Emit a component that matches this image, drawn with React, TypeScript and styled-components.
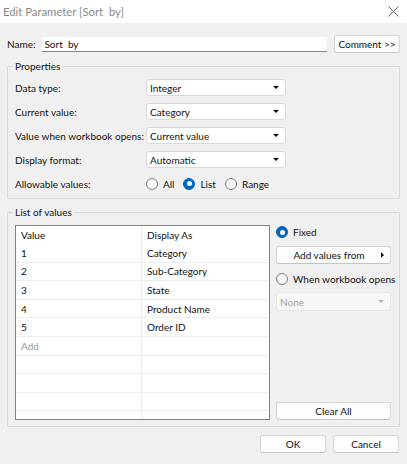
import React from "react";
import styled, { createGlobalStyle } from "styled-components";

const GlobalStyle = createGlobalStyle`
  html, body {
    margin: 0;
    padding: 0;
    background: #f0f0f0;
  }
  * {
    box-sizing: border-box;
  }
`;

const Window = styled.div`
  width: 407px;
  height: 464px;
  background: #f0f0f0;
  display: flex;
  flex-direction: column;
  font-family: Lato, "Noto Sans", sans-serif;
  font-size: 10px;
  color: #111111;
  overflow: hidden;
`;

const TitleBar = styled.div`
  height: 23px;
  background: #ffffff;
  display: flex;
  align-items: center;
  justify-content: space-between;
  padding: 0 8px 1px 3px;
`;

const Title = styled.span`
  color: #8a8a8a;
  font-size: 11.3px;
  white-space: pre;
`;

const Body = styled.div`
  flex: 1;
  display: flex;
  flex-direction: column;
  padding: 0 7px;
`;

const NameRow = styled.div`
  display: flex;
  align-items: center;
  gap: 7px;
  margin-top: 12px;
  height: 17px;
`;

const Label = styled.span`
  white-space: nowrap;
`;

const NameInput = styled.div`
  flex: 1;
  height: 15px;
  margin-top: 1px;
  background: #ffffff;
  border-bottom: 1px solid #868686;
  border-radius: 2px 2px 0 0;
  padding-left: 2px;
  display: flex;
  align-items: center;
  white-space: pre;
`;

const Button = styled.div<{ $width?: number }>`
  width: ${(p) => (p.$width ? `${p.$width}px` : "auto")};
  height: 18px;
  background: #fdfdfd;
  border: 1px solid #d6d6d6;
  border-bottom-color: #c4c4c4;
  border-radius: 3px;
  display: flex;
  align-items: center;
  justify-content: center;
  white-space: nowrap;
`;

const Group = styled.fieldset<{ $top: number }>`
  margin: ${(p) => p.$top}px 0 0;
  padding: 5px 8px 6px 7px;
  border: 1px solid #dadada;
  border-radius: 1px;
  min-width: 0;
`;

const Legend = styled.legend`
  padding: 0 2px;
  margin-left: -2px;
  line-height: 16px;
`;

const PropGrid = styled.div`
  display: grid;
  grid-template-columns: 131px 140px;
  grid-auto-rows: 17px;
  row-gap: 7px;
  align-items: center;
`;

const Combo = styled.div<{ $disabled?: boolean }>`
  height: 17px;
  background: ${(p) => (p.$disabled ? "#f7f7f7" : "#ffffff")};
  border: 1px solid ${(p) => (p.$disabled ? "#e6e6e6" : "#d9d9d9")};
  border-radius: 3px;
  color: ${(p) => (p.$disabled ? "#a3a3a3" : "#111111")};
  display: flex;
  align-items: center;
  justify-content: space-between;
  padding: 0 6px 0 3px;
`;

const DownArrow = styled.span<{ $disabled?: boolean }>`
  width: 0;
  height: 0;
  border-left: 3px solid transparent;
  border-right: 3px solid transparent;
  border-top: 3px solid ${(p) => (p.$disabled ? "#b5b5b5" : "#111")};
`;

const RightArrow = styled.span`
  width: 0;
  height: 0;
  border-top: 3px solid transparent;
  border-bottom: 3px solid transparent;
  border-left: 3px solid #111;
`;

const RadioGroup = styled.div`
  display: flex;
  align-items: center;
  gap: 9px;
`;

const RadioItem = styled.label`
  display: flex;
  align-items: center;
  gap: 5px;
  white-space: nowrap;
  height: 14px;
`;

const RadioDot = styled.span<{ $checked?: boolean }>`
  width: 12px;
  height: 12px;
  border-radius: 50%;
  flex-shrink: 0;
  background: ${(p) => (p.$checked ? "#0067c0" : "#f8f8f8")};
  border: 1px solid ${(p) => (p.$checked ? "#0067c0" : "#7d7d7d")};
  display: flex;
  align-items: center;
  justify-content: center;

  &::after {
    content: "";
    display: ${(p) => (p.$checked ? "block" : "none")};
    width: 5px;
    height: 5px;
    border-radius: 50%;
    background: #ffffff;
  }
`;

const ListBody = styled.div`
  display: flex;
  gap: 6px;
`;

const Table = styled.div`
  width: 255px;
  height: 195px;
  background: #ffffff;
  border: 1px solid #828282;
  overflow: hidden;
`;

const Row = styled.div<{ $header?: boolean }>`
  display: grid;
  grid-template-columns: 126px 1fr;
  height: ${(p) => (p.$header ? "18px" : "18.6px")};
  border-bottom: ${(p) => (p.$header ? "none" : "1px solid #ededed")};
`;

const Cell = styled.div<{ $muted?: boolean }>`
  display: flex;
  align-items: center;
  padding-left: 5px;
  color: ${(p) => (p.$muted ? "#9a9a9a" : "#111111")};

  &:first-child {
    border-right: 1px solid #ececec;
  }
`;

const SideColumn = styled.div`
  width: 115px;
  display: flex;
  flex-direction: column;
`;

const SideRadio = styled(RadioItem)<{ $top: number }>`
  margin-top: ${(p) => p.$top}px;
`;

const SideButton = styled(Button)<{ $top?: number }>`
  margin-top: ${(p) => (p.$top ? `${p.$top}px` : "0")};
  justify-content: space-between;
  padding: 0 6px 0 0;
`;

const ButtonText = styled.span`
  flex: 1;
  text-align: center;
`;

const SideCombo = styled(Combo)`
  margin-top: 6px;
  height: 19px;
`;

const Spacer = styled.div`
  flex: 1;
`;

const Footer = styled.div`
  display: flex;
  justify-content: flex-end;
  gap: 7px;
  margin-top: 8px;
  padding-right: 1px;
`;

const CloseIcon = () => (
  <svg width="11" height="11" viewBox="0 0 11 11">
    <path d="M0.5 0.5 L10.5 10.5 M10.5 0.5 L0.5 10.5" stroke="#6b6b6b" strokeWidth="1" />
  </svg>
);

const values = [
  ["1", "Category"],
  ["2", "Sub-Category"],
  ["3", "State"],
  ["4", "Product Name"],
  ["5", "Order ID"],
];

const properties = [
  ["Data type:", "Integer"],
  ["Current value:", "Category"],
  ["Value when workbook opens:", "Current value"],
  ["Display format:", "Automatic"],
];

export default function App() {
  return (
    <>
      <GlobalStyle />
      <Window>
        <TitleBar>
          <Title>Edit Parameter [Sort  by]</Title>
          <CloseIcon />
        </TitleBar>
        <Body>
          <NameRow>
            <Label>Name:</Label>
            <NameInput>Sort  by</NameInput>
            <Button $width={66}>Comment &gt;&gt;</Button>
          </NameRow>

          <Group $top={6}>
            <Legend>Properties</Legend>
            <PropGrid>
              {properties.map(([label, value]) => (
                <React.Fragment key={label}>
                  <Label>{label}</Label>
                  <Combo>
                    {value}
                    <DownArrow />
                  </Combo>
                </React.Fragment>
              ))}
              <Label>Allowable values:</Label>
              <RadioGroup>
                <RadioItem>
                  <RadioDot />
                  All
                </RadioItem>
                <RadioItem>
                  <RadioDot $checked />
                  List
                </RadioItem>
                <RadioItem>
                  <RadioDot />
                  Range
                </RadioItem>
              </RadioGroup>
            </PropGrid>
          </Group>

          <Group $top={5}>
            <Legend>List of values</Legend>
            <ListBody>
              <Table>
                <Row $header>
                  <Cell>Value</Cell>
                  <Cell>Display As</Cell>
                </Row>
                {values.map(([v, d]) => (
                  <Row key={v}>
                    <Cell>{v}</Cell>
                    <Cell>{d}</Cell>
                  </Row>
                ))}
                <Row>
                  <Cell $muted>Add</Cell>
                  <Cell />
                </Row>
                {[0, 1, 2, 3].map((i) => (
                  <Row key={i}>
                    <Cell />
                    <Cell />
                  </Row>
                ))}
              </Table>
              <SideColumn>
                <SideRadio $top={0}>
                  <RadioDot $checked />
                  Fixed
                </SideRadio>
                <SideButton $top={7}>
                  <ButtonText>Add values from</ButtonText>
                  <RightArrow />
                </SideButton>
                <SideRadio $top={8}>
                  <RadioDot />
                  When workbook opens
                </SideRadio>
                <SideCombo $disabled>
                  None
                  <DownArrow $disabled />
                </SideCombo>
                <Spacer />
                <Button>Clear All</Button>
              </SideColumn>
            </ListBody>
          </Group>

          <Footer>
            <Button $width={66}>OK</Button>
            <Button $width={66}>Cancel</Button>
          </Footer>
        </Body>
      </Window>
    </>
  );
}
